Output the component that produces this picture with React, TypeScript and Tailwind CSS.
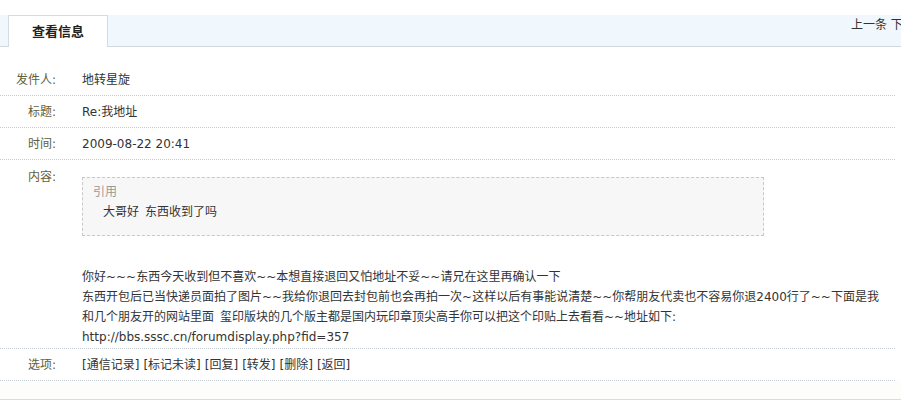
const font = { fontFamily: '"DejaVu Sans", "Noto Sans CJK SC", sans-serif' };

function Row({ label, children, className = "" }: { label: string; children: React.ReactNode; className?: string }) {
  return (
    <div className={`grid grid-cols-[56px_1fr] gap-x-[26px] border-b border-dotted border-[#c4ccd4] ${className}`}>
      <div className="text-right text-[#5e5e3a]">{label}</div>
      <div className="text-[#333]">{children}</div>
    </div>
  );
}

export default function App() {
  return (
    <div className="h-[404px] w-[901px] overflow-hidden bg-white text-[12px] leading-[16px]" style={font}>
      <div className="h-[15px]" />
      <div className="flex h-[32px] items-stretch border-b border-[#d3d8dd] bg-[#f0f7fd]">
        <div className="ml-[8px] -mb-px flex w-[100px] shrink-0 items-center justify-center border border-b-0 border-[#d2dce4] bg-white pt-[1px] text-[13px] font-bold text-[#222]">
          查看信息
        </div>
        <div className="ml-[743px] flex shrink-0 items-center whitespace-nowrap pb-[11px] text-[#333]">
          上一条&nbsp;下一条
        </div>
      </div>

      <div className="mt-[17px] w-[895px]">
        <Row label="发件人:" className="h-[32px] items-center">地转星旋</Row>
        <Row label="标题:" className="h-[32px] items-center">Re:我地址</Row>
        <Row label="时间:" className="h-[32px] items-center">2009-08-22 20:41</Row>
        <Row label="内容:" className="pt-[9px] pb-px">
          <div className="pt-[8px]">
            <div className="h-[59px] w-[682px] border border-dashed border-[#c8c8c8] bg-[#f7f7f7] px-[10px] pt-[6px]">
              <div className="text-[#999]">引用</div>
              <div className="mt-[2px] pl-[10px] leading-[20px] text-[#333]">大哥好&#8194;东西收到了吗</div>
            </div>
            <div className="mt-[31px] whitespace-nowrap leading-[20px]">
              你好~~~东西今天收到但不喜欢~~本想直接退回又怕地址不妥~~请兄在这里再确认一下
              <br />
              东西开包后已当快递员面拍了图片~~我给你退回去封包前也会再拍一次~这样以后有事能说清楚~~你帮朋友代卖也不容易你退2400行了~~下面是我
              <br />
              和几个朋友开的网站里面&#8194;玺印版块的几个版主都是国内玩印章顶尖高手你可以把这个印贴上去看看~~地址如下:
              <br />
              http://bbs.sssc.cn/forumdisplay.php?fid=357
            </div>
          </div>
        </Row>
        <Row label="选项:" className="h-[32px] items-center pt-px">
          <span className="flex gap-[4px]">
            <a>[通信记录]</a>
            <a>[标记未读]</a>
            <a>[回复]</a>
            <a>[转发]</a>
            <a>[删除]</a>
            <a>[返回]</a>
          </span>
        </Row>
      </div>
      <div className="h-[19px] border-b border-[#d5dee2] bg-[#fdfdfc]" />
    </div>
  );
}
